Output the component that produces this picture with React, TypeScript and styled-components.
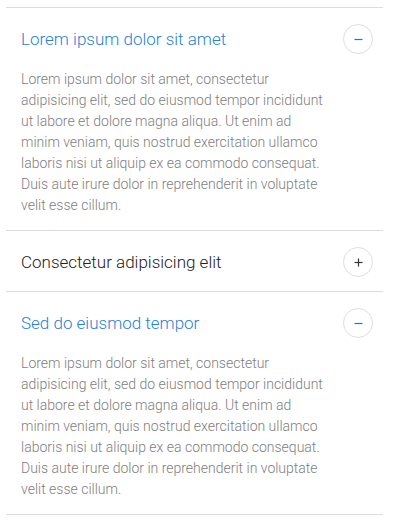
import React, {useState} from 'react'
import styled, {createGlobalStyle} from 'styled-components'

const GlobalStyle = createGlobalStyle`
    html, body {
        margin: 0;
        padding: 0;
        background: #ffffff;
        font-family: Roboto, 'Noto Sans', sans-serif;
    }
`

const Wrapper = styled.div`
    padding: 7px 17px 0 6px;
`

const Item = styled.section`
    border-top: 1px solid #dddddd;
    &:last-child {
        border-bottom: 1px solid #dddddd;
    }
`

const Header = styled.button<{$open: boolean}>`
    display: flex;
    align-items: center;
    justify-content: space-between;
    width: 100%;
    height: 60px;
    padding: 2px 10px 0 15px;
    border: none;
    background: none;
    cursor: pointer;
    font-family: Roboto, 'Noto Sans', sans-serif;
    font-size: 17px;
    font-weight: 300;
    text-align: left;
    color: ${(p) => (p.$open ? '#2a7fd8' : '#222222')};
`

const Toggle = styled.span<{$open: boolean}>`
    display: flex;
    align-items: center;
    justify-content: center;
    width: 30px;
    height: 30px;
    box-sizing: border-box;
    border: 1px solid #dedede;
    border-radius: 50%;
    color: ${(p) => (p.$open ? '#1e78d8' : '#333333')};
`

const Content = styled.div`
    padding: 1px 50px 14px 15px;
    font-size: 14px;
    font-weight: 300;
    line-height: 21px;
    color: #7e7e7e;
`

const text =
    'Lorem ipsum dolor sit amet, consectetur adipisicing elit, sed do eiusmod tempor incididunt ut labore et dolore magna aliqua. Ut enim ad minim veniam, quis nostrud exercitation ullamco laboris nisi ut aliquip ex ea commodo consequat. Duis aute irure dolor in reprehenderit in voluptate velit esse cillum.'

const items = [
    {title: 'Lorem ipsum dolor sit amet', body: text},
    {title: 'Consectetur adipisicing elit', body: text},
    {title: 'Sed do eiusmod tempor', body: text},
]

const Icon = ({open}: {open: boolean}) => (
    <svg width="11" height="11" viewBox="0 0 11 11">
        <line x1="1.5" y1="5.5" x2="9.5" y2="5.5" stroke="currentColor" strokeWidth="1.2" />
        {!open && <line x1="5.5" y1="1.5" x2="5.5" y2="9.5" stroke="currentColor" strokeWidth="1.2" />}
    </svg>
)

const App: React.FC = () => {
    const [open, setOpen] = useState<boolean[]>([true, false, true])

    const toggle = (i: number) => {
        setOpen(open.map((v, j) => (j === i ? !v : v)))
    }

    return (
        <Wrapper>
            <GlobalStyle />
            {items.map((item, i) => (
                <Item key={item.title}>
                    <Header $open={open[i]} onClick={() => toggle(i)} type="button">
                        {item.title}
                        <Toggle $open={open[i]}>
                            <Icon open={open[i]} />
                        </Toggle>
                    </Header>
                    {open[i] && <Content>{item.body}</Content>}
                </Item>
            ))}
        </Wrapper>
    )
}

export default App
